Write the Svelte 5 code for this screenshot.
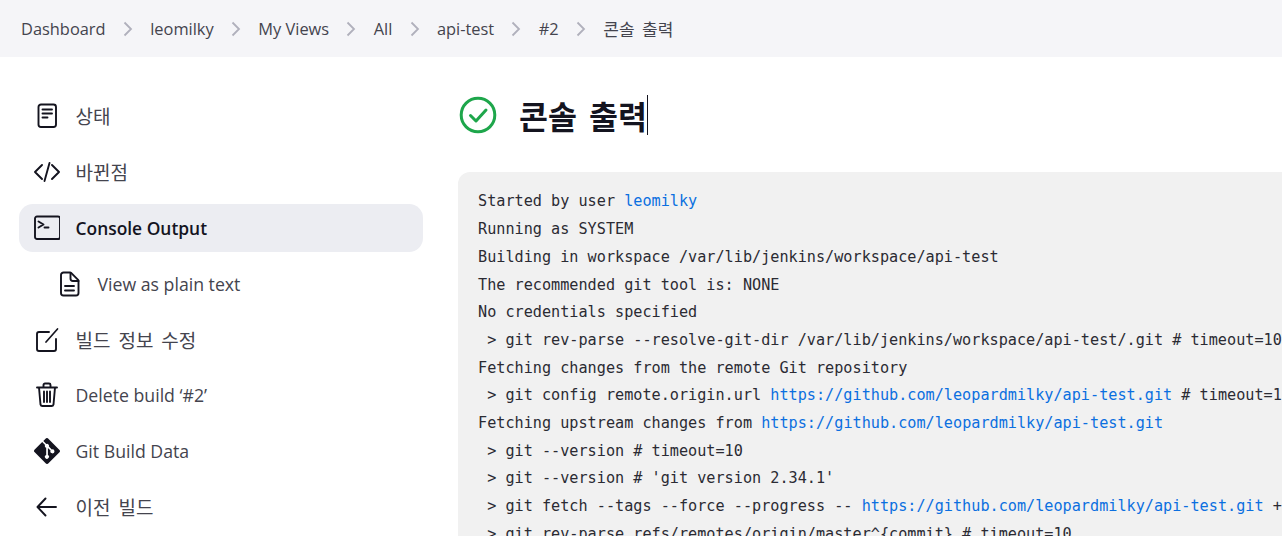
<script lang="ts">
	const crumbs = ['Dashboard', 'leomilky', 'My Views', 'All', 'api-test', '#2'];
	const repo = 'https://github.com/leopardmilky/api-test.git';
</script>

<div class="page">
	<nav class="crumbs">
		{#each crumbs as crumb}
			<span class="crumb">{crumb}</span>
			<svg class="sep" width="12" height="16" viewBox="0 0 12 16" fill="none" stroke="currentColor" stroke-width="1.8"><path d="M2.5 1.5 9 8l-6.500 6.500" /></svg>
		{/each}
		<span class="crumb ko">콘솔 출력</span>
	</nav>

	<div class="body">
		<aside class="side">
			<div class="task">
				<svg class="ico" viewBox="0 0 26 26" fill="none" stroke="currentColor" stroke-width="1.9" stroke-linecap="round" stroke-linejoin="round"><rect x="4.500" y="1.500" width="17.500" height="22.500" rx="2.500" /><path d="M8.500 6.500h9.500M8.500 10.500h9.500M8.500 14.500h5" /></svg>
				<span class="ko">상태</span>
			</div>
			<div class="task">
				<svg class="ico" viewBox="0 0 26 26" fill="none" stroke="currentColor" stroke-width="1.9" stroke-linecap="round" stroke-linejoin="round"><path d="M8 6 1 13l7 7M18 6l7 7-7 7M15.500 4l-5 18" /></svg>
				<span class="ko">바뀐점</span>
			</div>
			<div class="task active">
				<svg class="ico" viewBox="0 0 26 26" fill="none" stroke="currentColor" stroke-width="1.9" stroke-linecap="round" stroke-linejoin="round"><rect x="1" y="1.500" width="25" height="22.500" rx="2" /><path d="m4.500 6.500 5 3-5 3M10.500 12.500h4" /></svg>
				<span>Console Output</span>
			</div>
			<div class="task sub">
				<svg class="ico" viewBox="0 0 26 26" fill="none" stroke="currentColor" stroke-width="1.9" stroke-linecap="round" stroke-linejoin="round"><path d="M5 4a2.500 2.500 0 0 1 2.500-2.500H14a1.500 1.500 0 0 1 1.100.400l7 7a1.500 1.500 0 0 1 .400 1.100v12a2.500 2.500 0 0 1-2.500 2.500H7.500A2.500 2.500 0 0 1 5 22z" /><path d="M14.500 2v5.500A2.500 2.500 0 0 0 17 10h5.500M9 15h9M9 19.500h9" /></svg>
				<span>View as plain text</span>
			</div>
			<div class="task">
				<svg class="ico" viewBox="0 0 26 26" fill="none" stroke="currentColor" stroke-width="1.9" stroke-linecap="round" stroke-linejoin="round"><path d="M15 5H5a2 2 0 0 0-2 2v15a2 2 0 0 0 2 2h15a2 2 0 0 0 2-2V12" /><path d="m12 15 L23.500 2" stroke-width="1.700" /></svg>
				<span class="ko">빌드 정보 수정</span>
			</div>
			<div class="task">
				<svg class="ico" viewBox="0 0 26 26" fill="none" stroke="currentColor" stroke-width="1.9" stroke-linecap="round" stroke-linejoin="round"><path d="M3 5.500h20M5 5.500l1.500 17a2 2 0 0 0 2 1.500h9a2 2 0 0 0 2-1.500l1.500-17M9.500 5.500V3a1.500 1.500 0 0 1 1.500-1.500h4A1.500 1.500 0 0 1 16.500 3v2.500M10 9.500V20M13 9.500V20M16 9.500V20" /></svg>
				<span>Delete build ‘#2’</span>
			</div>
			<div class="task">
				<svg class="ico" viewBox="0 0 26 26"><path fill="currentColor" fill-rule="evenodd" d="M25.500 11.900 14.100.500a1.700 1.700 0 0 0-2.300 0L9.300 3l3 3a2 2 0 0 1 2.600 2.600l2.900 2.900a2 2 0 1 1-1.200 1.100l-2.700-2.700v7.100a2 2 0 1 1-1.700-.100V9.800a2 2 0 0 1-1.100-2.700L8.200 4.100.5 11.800a1.700 1.700 0 0 0 0 2.300l11.400 11.400a1.700 1.700 0 0 0 2.300 0l11.300-11.300a1.700 1.700 0 0 0 0-2.300z" /></svg>
				<span>Git Build Data</span>
			</div>
			<div class="task">
				<svg class="ico" viewBox="0 0 26 26" fill="none" stroke="currentColor" stroke-width="1.9" stroke-linecap="round" stroke-linejoin="round"><path d="M11.500 4.500 3.500 13l8 8.500M4 13h18" /></svg>
				<span class="ko">이전 빌드</span>
			</div>
		</aside>

		<main class="main">
			<header class="head">
				<svg class="ok" width="38" height="38" viewBox="0 0 38 38" fill="none" stroke="#1ea64b" stroke-linecap="round" stroke-linejoin="round"><circle cx="19" cy="19" r="16.800" stroke-width="3" /><path d="m11.500 19.500 5.500 5.500 10-11" stroke-width="3" /></svg>
				<h1>콘솔 출력<span class="caret"></span></h1>
			</header>
			<pre class="log">Started by user <a href="#u">leomilky</a>
Running as SYSTEM
Building in workspace /var/lib/jenkins/workspace/api-test
The recommended git tool is: NONE
No credentials specified
 &gt; git rev-parse --resolve-git-dir /var/lib/jenkins/workspace/api-test/.git # timeout=10
Fetching changes from the remote Git repository
 &gt; git config remote.origin.url <a href="#r">{repo}</a> # timeout=10
Fetching upstream changes from <a href="#r">{repo}</a>
 &gt; git --version # timeout=10
 &gt; git --version # 'git version 2.34.1'
 &gt; git fetch --tags --force --progress -- <a href="#r">{repo}</a> +refs/heads/*:refs/remotes/origin/*
 &gt; git rev-parse refs/remotes/origin/master^&#123;commit&#125; # timeout=10</pre>
		</main>
	</div>
</div>

<style>
	:global(body) {
		margin: 0;
		background: #fff;
	}

	.page {
		height: 536px;
		overflow: hidden;
		color: #14141f;
		font-family: 'Open Sans', 'Noto Sans CJK KR', sans-serif;
		font-size: 16.400px;
	}

	.crumbs {
		display: flex;
		align-items: center;
		height: 57px;
		padding-left: 21px;
		background: #f5f5f8;
		color: #44444e;
		gap: 16.300px;
	}

	.crumb.ko {
		font-size: 17px;
		word-spacing: 3px;
	}

	.sep {
		color: #b0b0bc;
	}

	.body {
		display: flex;
	}

	.side {
		flex: 0 0 404px;
		display: flex;
		flex-direction: column;
		gap: 7.150px;
		margin: 35px 35px 0 19px;
	}

	.task {
		display: flex;
		align-items: center;
		gap: 15.500px;
		height: 48.700px;
		padding-left: 15px;
		border-radius: 14px;
		color: #44444e;
		font-size: 17.700px;
	}

	.task .ko {
		font-size: 19px;
		word-spacing: 3px;
	}

	.task.sub {
		padding-left: 37px;
	}

	.task.active {
		background: #ecedf2;
		color: #14141f;
		font-size: 17.400px;
		font-weight: 600;
	}

	.ico {
		flex: none;
		width: 26px;
		height: 26px;
		color: #14141f;
	}

	.main {
		flex: 1;
		min-width: 0;
	}

	.head {
		display: flex;
		align-items: center;
		gap: 22px;
		height: 40px;
		margin-top: 38px;
		margin-left: 1px;
	}

	h1 {
		display: flex;
		align-items: center;
		margin: 0;
		font-family: 'Noto Sans CJK KR', sans-serif;
		font-size: 31.500px;
		font-weight: 700;
		color: #14141f;
		white-space: pre;
		word-spacing: 5px;
	}

	.caret {
		width: 1px;
		height: 40px;
		background: #14141f;
	}

	.log {
		margin: 37px 0 0;
		padding: 16.400px 20px;
		width: 1200px;
		border-radius: 12px;
		background: #f1f1f1;
		color: #2b2b33;
		font-family: 'DejaVu Sans Mono', monospace;
		font-size: 15.180px;
		line-height: 27.700px;
	}

	.log a {
		color: #0b6fe0;
		text-decoration: none;
	}
</style>
